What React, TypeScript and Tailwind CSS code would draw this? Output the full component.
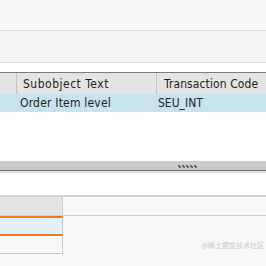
import React from 'react';

const font = { fontFamily: '"DejaVu Sans Condensed", "DejaVu Sans", sans-serif', fontStretch: 'condensed' };

function Grip() {
  return (
    <svg width="20" height="4" viewBox="0 0 20 4" className="block">
      {[0, 4, 8, 12, 16].map((x) => (
        <g key={x} fill="#6b6b6b">
          <rect x={x} y={0} width={2} height={2} />
          <rect x={x + 1} y={1} width={2} height={2} />
        </g>
      ))}
    </svg>
  );
}

export default function App() {
  return (
    <div className="w-[266px] h-[266px] overflow-hidden bg-white text-[12px] text-[#222]" style={font}>
      {/* toolbars */}
      <div className="h-[31px] bg-[#f7f7f7] border-b border-[#dcdcdc]" />
      <div className="h-[32px] bg-[#f4f4f4] border-b border-[#dcdcdc]" />
      <div className="h-[9px] bg-white" />

      {/* grid */}
      <div className="border-t border-[#7d7d7d]">
        <div className="flex h-[21px] bg-[#e4e4e4] items-center">
          <div className="w-[17px] h-full border-r border-[#c4c4c4]" />
          <div className="w-[140px] h-full border-r border-[#c4c4c4] pl-[6px] flex items-center tracking-[0.5px]">Subobject Text</div>
          <div className="flex-1 h-full pl-[7px] flex items-center whitespace-nowrap tracking-[0.1px]">Transaction Code</div>
        </div>
        <div className="flex h-[18px] bg-[#c9e2f0] items-center">
          <div className="w-[20px]" />
          <div className="w-[138px] whitespace-nowrap tracking-[0.2px]">Order Item level</div>
          <div className="flex-1">SEU_INT</div>
        </div>
      </div>

      <div className="h-[49px] bg-white" />

      {/* splitter */}
      <div className="h-[9px] bg-[#cbcbcb] flex justify-end pr-[68px] items-end pb-[1px]">
        <Grip />
      </div>
      <div className="h-[1px] bg-[#6e6e6e]" />
      <div className="h-[2px] bg-[#e2e2e2]" />
      <div className="h-[22px] bg-white" />

      {/* lower form */}
      <div className="border-t-2 border-[#d3d3d3] bg-[#f8f8f8] h-[71px] flex flex-col">
        <div className="flex h-[18px]">
          <div className="w-[63px] bg-[#e3e3e3] border-r border-[#d0d0d0]" />
          <div className="flex-1" />
        </div>
        <div className="h-[1px] bg-[#cfcfcf]" />
        <div className="w-[63px] border-y-2 border-[#e8782a] bg-[#e5f1fa] h-[20px] border-r border-r-[#c8c8c8]" />
        <div className="w-[63px] h-[18px] border-r border-b border-[#c8c8c8] bg-[#f8f8f8]" />
        <div className="flex-1 flex justify-end items-start pr-[2px]">
          <span className="text-[7px] text-[#c8c8c8] leading-none mt-[-12px]" style={{ fontFamily: '"Noto Sans CJK SC", sans-serif' }}>
            @稀土掘金技术社区
          </span>
        </div>
      </div>
    </div>
  );
}
